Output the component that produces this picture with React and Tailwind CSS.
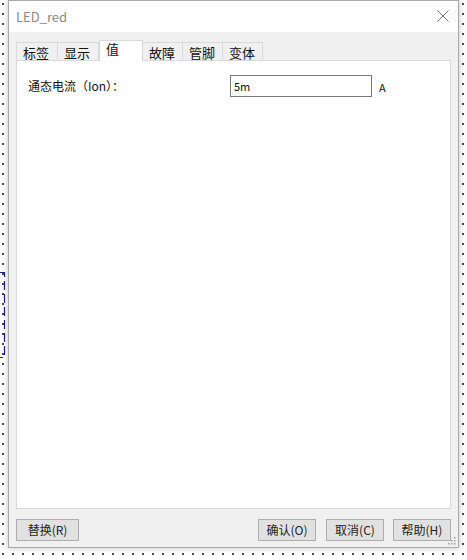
import React from 'react';

const tabs = ['标签', '显示', '值', '故障', '管脚', '变体'];
const font = { fontFamily: '"Noto Sans CJK SC", "Noto Sans", sans-serif' };

function Btn({ children, className = '' }) {
  return (
    <button
      className={`h-[22px] border border-[#adadad] bg-[#e1e1e1] text-[12px] text-[#222] flex items-center justify-center ${className}`}
    >
      {children}
    </button>
  );
}

export default function App() {
  return (
    <div
      className="relative w-[467px] h-[560px] bg-white bg-[radial-gradient(circle,#444_0.7px,transparent_0.9px)] bg-[length:10px_10px] bg-[position:-2px_-1px] overflow-hidden"
      style={font}
    >
      {/* part of a dashed selection rectangle on the canvas */}
      <svg width="8" height="88" viewBox="0 0 8 88" className="absolute left-0 top-[271px]">
        <path d="M0 1.5H4.5V86.5H0" fill="none" stroke="#1c1c86" strokeWidth="1.2" strokeDasharray="9 4" />
      </svg>

      {/* Dialog */}
      <div className="absolute left-[8px] top-0 w-[451px] h-[548px] bg-[#f0f0f0] border border-[#aaaaaa] shadow-[0_0_6px_rgba(0,0,0,0.25)] flex flex-col">
        {/* Title */}
        <div className="h-[31px] bg-white flex items-center justify-between pl-[7px] pr-[9px] shrink-0">
          <span className="text-[13px] text-[#8a8a8a]">LED_red</span>
          <svg width="12" height="12" viewBox="0 0 12 12" className="mb-[1px]">
            <path d="M0.5 0.5L11.5 11.5M11.5 0.5L0.5 11.5" stroke="#6f6f6f" strokeWidth="1" />
          </svg>
        </div>

        {/* Tabs */}
        <div className="flex items-end pl-[7px] h-[28px] shrink-0">
          {tabs.map((t, i) =>
            i === 2 ? (
              <div
                key={t}
                className="relative z-10 w-[44px] h-[21px] bg-white border border-b-0 border-[#d9d9d9] -mb-[1px] pl-[6px] text-[13px] leading-[16px] text-[#111]"
              >
                {t}
              </div>
            ) : (
              <div
                key={t}
                className={`h-[18px] bg-[#f0f0f0] border border-b-0 border-[#d9d9d9] pl-[6px] text-[13px] leading-[20px] text-[#111] ${
                  i === 0 ? 'w-[42px]' : i === 1 ? 'w-[42px] -ml-[1px]' : 'w-[41px] -ml-[1px]'
                }`}
              >
                {t}
              </div>
            )
          )}
        </div>

        {/* Panel */}
        <div className="mx-[7px] h-[449px] bg-white border border-[#d9d9d9] shrink-0">
          <div className="flex items-center mt-[14px] h-[22px]">
            <span className="ml-[11px] w-[202px] text-[12px] text-[#111]">通态电流（Ion）：</span>
            <div className="w-[142px] h-[22px] border border-[#7a7a7a] flex items-center pl-[3px] text-[11px] text-[#111]">
              5m
            </div>
            <span className="ml-[7px] mt-[2px] text-[11px] text-[#111]">A</span>
          </div>
        </div>

        {/* Buttons */}
        <div className="flex items-center mt-[10px] px-[7px]">
          <Btn className="w-[63px]">替换(R)</Btn>
          <div className="flex-1" />
          <Btn className="w-[58px]">确认(O)</Btn>
          <Btn className="w-[58px] ml-[10px]">取消(C)</Btn>
          <Btn className="w-[58px] ml-[9px]">帮助(H)</Btn>
        </div>

        {/* Resize grip */}
        <svg width="9" height="9" viewBox="0 0 9 9" className="absolute right-[2px] bottom-[2px]">
          {[[7, 1], [7, 4], [4, 4], [7, 7], [4, 7], [1, 7]].map(([x, y], k) => (
            <rect key={k} x={x} y={y} width="1.5" height="1.5" fill="#a0a0a0" />
          ))}
        </svg>
      </div>
    </div>
  );
}
